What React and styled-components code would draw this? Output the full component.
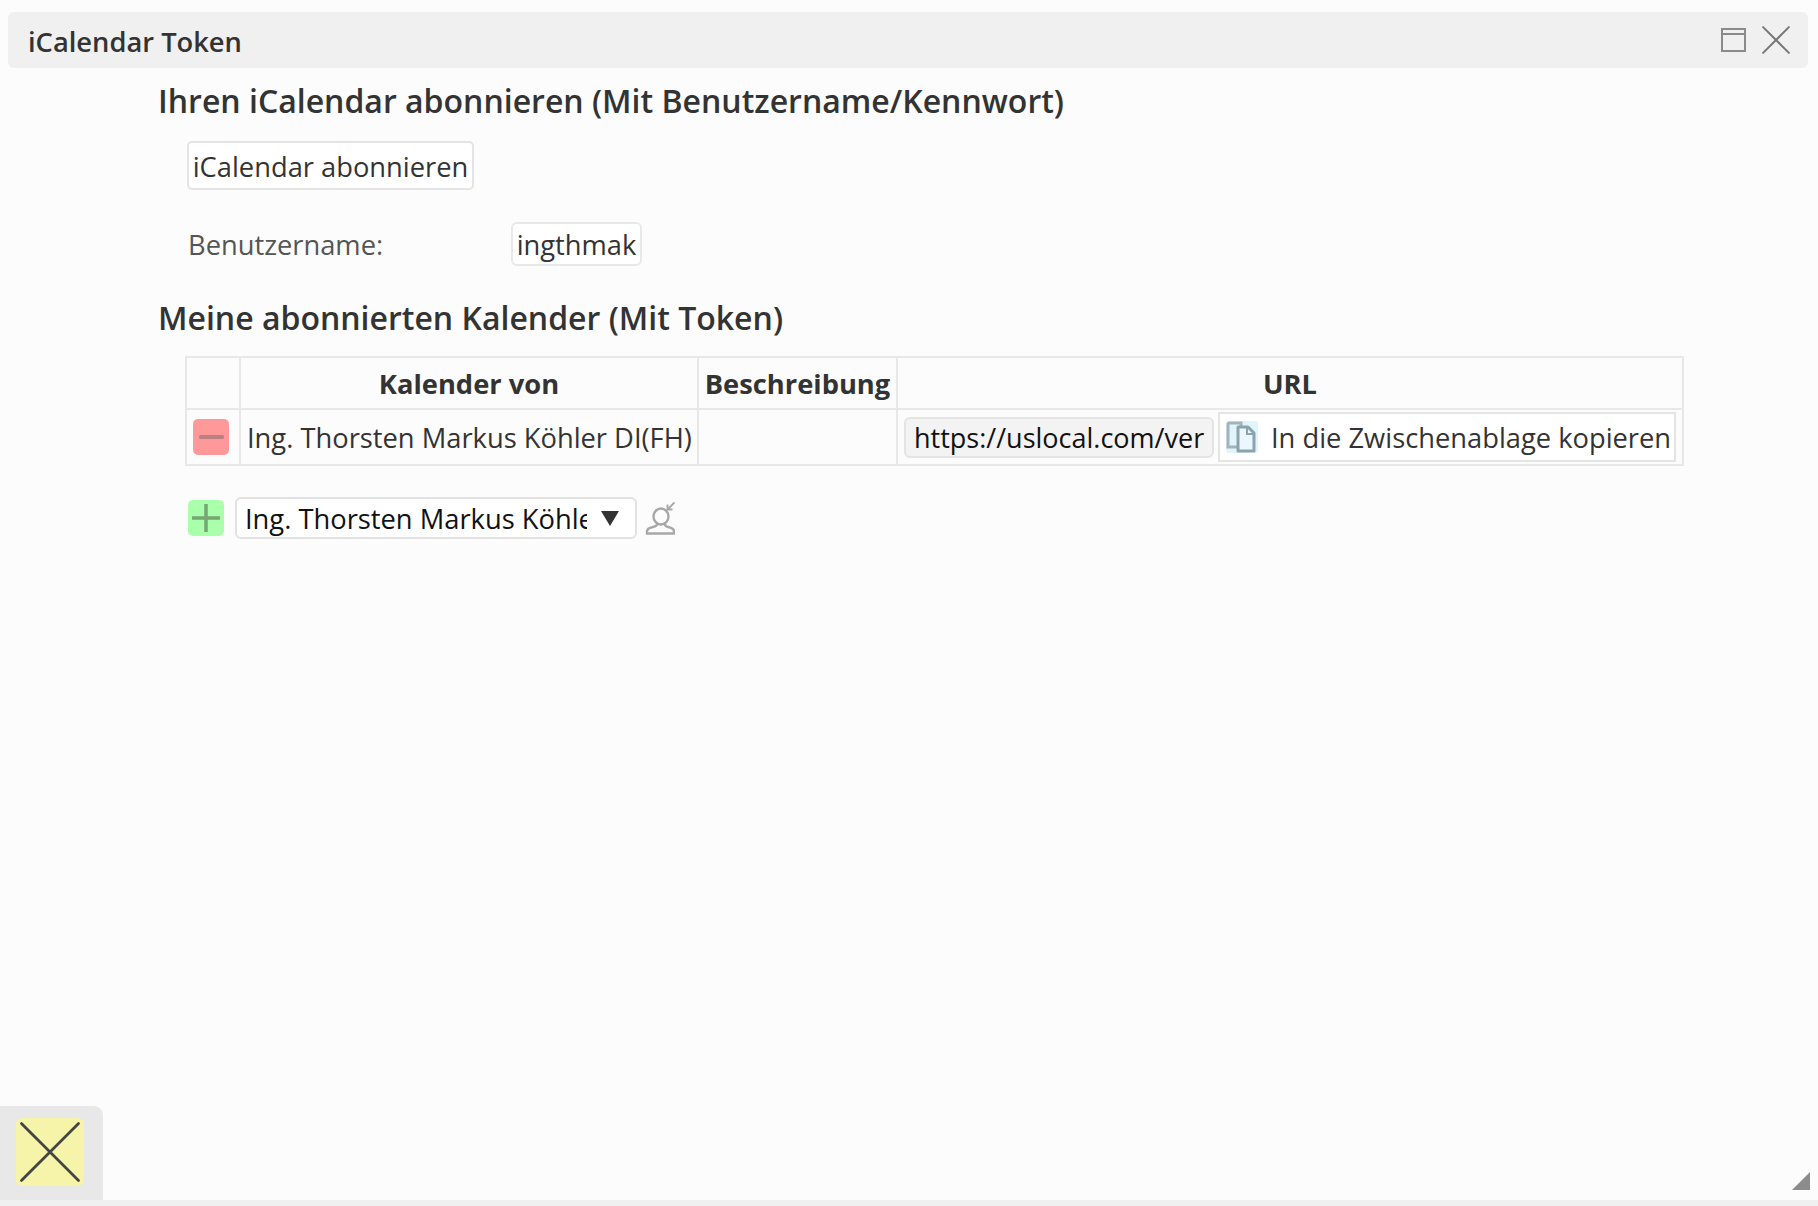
import React from "react";
import styled, { createGlobalStyle } from "styled-components";

const Global = createGlobalStyle`
  html, body { margin: 0; padding: 0; height: 100%; background: #fcfcfc; }
  body { font-family: "Open Sans", "Liberation Sans", sans-serif; color: #333; overflow: hidden; }
`;

const Window = styled.div`
  position: relative;
  height: 1206px;
  display: flex;
  flex-direction: column;
  background: #fcfcfc;
`;

const TitleBar = styled.div`
  margin: 12px 10px 0 8px;
  height: 56px;
  flex: none;
  box-sizing: border-box;
  padding: 0 18px 0 20px;
  display: flex;
  align-items: center;
  justify-content: space-between;
  background: #f0f0f0;
  border-radius: 6px;
`;

const TitleText = styled.div`
  font-size: 27.3px;
  font-weight: 600;
  color: #333;
  position: relative;
  top: 1px;
`;

const TitleIcons = styled.div`
  display: flex;
  align-items: center;
  gap: 15px;
`;

const Content = styled.div`
  flex: 1;
  padding: 0 0 0 158px;
`;

const Heading = styled.h2`
  margin: 0;
  font-size: 32px;
  font-weight: 600;
  line-height: 41px;
  color: #333;
`;

const FirstHeading = styled(Heading)`
  margin-top: 12px;
`;

const SecondHeading = styled(Heading)`
  margin-top: 31px;
`;

const Section = styled.div`
  padding-left: 29px;
`;

const SubscribeButton = styled.button`
  display: block;
  margin: 20px 0 0;
  width: 287px;
  height: 49px;
  padding: 2px 0 0;
  box-sizing: border-box;
  background: #fff;
  border: 2px solid #e4e4e4;
  border-radius: 5px;
  font: 400 27.3px "Open Sans", sans-serif;
  color: #333;
`;

const UserRow = styled.div`
  display: flex;
  align-items: center;
  margin-top: 32px;
`;

const UserLabel = styled.div`
  width: 323px;
  padding-left: 1px;
  padding-top: 1px;
  font-size: 27.3px;
  color: #555;
`;

const UserValue = styled.div`
  width: 131px;
  height: 44px;
  box-sizing: border-box;
  padding-top: 1px;
  display: flex;
  align-items: center;
  justify-content: center;
  background: #fff;
  border: 2px solid #e8e8e8;
  border-radius: 6px;
  font-size: 27.3px;
  color: #333;
`;

const Table = styled.table`
  margin: 18px 0 0 -2px;
  width: 1499px;
  border-collapse: collapse;
  table-layout: fixed;
  font-size: 27.3px;
`;

const Cell = styled.td`
  border: 2px solid #e8e8e8;
  padding: 0;
  height: ${(p) => p.$h}px;
  box-sizing: border-box;
  color: #333;
`;

const HeadCell = styled(Cell).attrs({ as: "th" })`
  font-weight: 700;
  text-align: center;
`;

const NameCell = styled(Cell)`
  padding-left: 6px;
  white-space: nowrap;
`;

const CenterBox = styled.div`
  display: flex;
  align-items: center;
  justify-content: center;
  padding-right: 4px;
`;

const UrlCell = styled.div`
  display: flex;
  align-items: center;
  gap: 4px;
  padding-left: 6px;
`;

const SquareButton = styled.div`
  width: 36px;
  height: 36px;
  border-radius: 5px;
  background: ${(p) => p.$bg};
  display: flex;
  align-items: center;
  justify-content: center;
  flex: none;
`;

const UrlBox = styled.div`
  width: 310px;
  height: 41px;
  box-sizing: border-box;
  padding-left: 8px;
  display: flex;
  align-items: center;
  overflow: hidden;
  white-space: nowrap;
  font-size: 27px;
  background: #f3f3f3;
  border: 2px solid #e4e4e4;
  border-radius: 6px;
  color: #111;
`;

const CopyButton = styled.div`
  width: 458px;
  height: 50px;
  box-sizing: border-box;
  display: flex;
  align-items: center;
  gap: 13px;
  padding-left: 6px;
  white-space: nowrap;
  background: #fff;
  border: 2px solid #e4e4e4;
  color: #333;
`;

const AddRow = styled.div`
  display: flex;
  align-items: center;
  margin-top: 31px;
  margin-left: 1px;
`;

const SelectBox = styled.div`
  margin-left: 11px;
  width: 402px;
  height: 42px;
  box-sizing: border-box;
  display: flex;
  align-items: center;
  padding-left: 8px;
  background: #fff;
  border: 2px solid #e2e2e2;
  border-radius: 6px;
  font-size: 27.3px;
  color: #111;
`;

const SelectText = styled.div`
  width: 342px;
  overflow: hidden;
  white-space: nowrap;
`;

const SelectArrow = styled.div`
  margin-left: 14px;
  width: 0;
  height: 0;
  border-left: 9px solid transparent;
  border-right: 9px solid transparent;
  border-top: 15px solid #333;
`;

const PersonWrap = styled.div`
  margin-left: 8px;
  display: flex;
`;

const Footer = styled.div`
  flex: none;
  height: 100px;
  display: flex;
  flex-direction: column;
  justify-content: flex-end;
`;

const FooterTab = styled.div`
  width: 103px;
  height: 94px;
  box-sizing: border-box;
  padding: 12px 0 0 16px;
  background: #e8e8e8;
  border-top-right-radius: 9px;
`;

const CloseButton = styled.div`
  width: 68px;
  height: 68px;
  border-radius: 6px;
  background: #f5f4a8;
  display: flex;
  align-items: center;
  justify-content: center;
`;

const FooterStrip = styled.div`
  height: 6px;
  background: #f0f0f0;
`;

const ResizeGrip = styled.div`
  position: absolute;
  right: 8px;
  bottom: 16px;
  width: 0;
  height: 0;
  border-left: 18px solid transparent;
  border-bottom: 18px solid #8c8c8c;
`;

const MaximizeIcon = () => (
  <svg width="26" height="26" viewBox="0 0 26 26" fill="none" stroke="#8a8a8a" strokeWidth="2">
    <rect x="1" y="2" width="23" height="22" />
    <path d="M1 7h23" />
  </svg>
);

const CrossIcon = ({ size, color, width }) => (
  <svg width={size} height={size} viewBox="0 0 100 100" fill="none" stroke={color} strokeWidth={width} strokeLinecap="round">
    <path d="M4 4L96 96M96 4L4 96" />
  </svg>
);

const MinusIcon = () => (
  <svg width="25" height="4" viewBox="0 0 25 4">
    <rect width="25" height="4" rx="1.500" fill="#bd8080" />
  </svg>
);

const PlusIcon = () => (
  <svg width="28" height="28" viewBox="0 0 28 28" fill="none" stroke="#76a676" strokeWidth="3.500">
    <path d="M0 14h28M14 0v28" />
  </svg>
);

const CopyIcon = () => (
  <svg width="32" height="32" viewBox="0 0 32 32" fill="none">
    <rect width="32" height="32" rx="3" fill="#e2f4fb" />
    <path d="M15 5V2H3.500a1.500 1.500 0 0 0-1.500 1.500V26h9" stroke="#a3b3b9" strokeWidth="3" />
    <path d="M12 6h10l6 6v18H12z" fill="#eaf7fc" stroke="#8ba3ac" strokeWidth="3" strokeLinejoin="round" />
    <path d="M21 6v7h7" stroke="#8ba3ac" strokeWidth="2" />
  </svg>
);

const PersonIcon = () => (
  <svg width="30" height="34" viewBox="0 0 30 34" fill="none" stroke="#a8a8a8" strokeWidth="2.400">
    <ellipse cx="16" cy="15.500" rx="7.500" ry="8" />
    <path d="M12 23c0 1.500-1.500 2.500-4 3-4 .8-6 2-6 4.500v2h27v-2c0-2.500-2-3.700-6-4.500-2.500-.5-3-1.500-3-3" />
    <path d="M29.500 1.500l-7 7M22.500 3.500v5h5" strokeWidth="1.800" />
  </svg>
);

export default function App() {
  return (
    <Window>
      <Global />
      <TitleBar>
        <TitleText>iCalendar Token</TitleText>
        <TitleIcons>
          <MaximizeIcon />
          <CrossIcon size={28} color="#777" width={7} />
        </TitleIcons>
      </TitleBar>
      <Content>
        <FirstHeading>Ihren iCalendar abonnieren (Mit Benutzername/Kennwort)</FirstHeading>
        <Section>
          <SubscribeButton>iCalendar abonnieren</SubscribeButton>
          <UserRow>
            <UserLabel>Benutzername:</UserLabel>
            <UserValue>ingthmak</UserValue>
          </UserRow>
        </Section>
        <SecondHeading>Meine abonnierten Kalender (Mit Token)</SecondHeading>
        <Section>
          <Table>
            <colgroup>
              <col style={{ width: 54 }} />
              <col style={{ width: 458 }} />
              <col style={{ width: 199 }} />
              <col />
            </colgroup>
            <thead>
              <tr>
                <HeadCell $h={52} />
                <HeadCell $h={52}>Kalender von</HeadCell>
                <HeadCell $h={52}>Beschreibung</HeadCell>
                <HeadCell $h={52}>URL</HeadCell>
              </tr>
            </thead>
            <tbody>
              <tr>
                <Cell $h={56}>
                  <CenterBox>
                    <SquareButton $bg="#ff9999">
                      <MinusIcon />
                    </SquareButton>
                  </CenterBox>
                </Cell>
                <NameCell $h={56}>Ing. Thorsten Markus Köhler DI(FH)</NameCell>
                <Cell $h={56} />
                <Cell $h={56}>
                  <UrlCell>
                    <UrlBox>https://uslocal.com/ver</UrlBox>
                    <CopyButton>
                      <CopyIcon />
                      In die Zwischenablage kopieren
                    </CopyButton>
                  </UrlCell>
                </Cell>
              </tr>
            </tbody>
          </Table>
          <AddRow>
            <SquareButton $bg="#aaffaa">
              <PlusIcon />
            </SquareButton>
            <SelectBox>
              <SelectText>Ing. Thorsten Markus Köhler DI(FH)</SelectText>
              <SelectArrow />
            </SelectBox>
            <PersonWrap>
              <PersonIcon />
            </PersonWrap>
          </AddRow>
        </Section>
      </Content>
      <Footer>
        <FooterTab>
          <CloseButton>
            <CrossIcon size={62} color="#444" width={4.5} />
          </CloseButton>
        </FooterTab>
        <FooterStrip />
      </Footer>
      <ResizeGrip />
    </Window>
  );
}
